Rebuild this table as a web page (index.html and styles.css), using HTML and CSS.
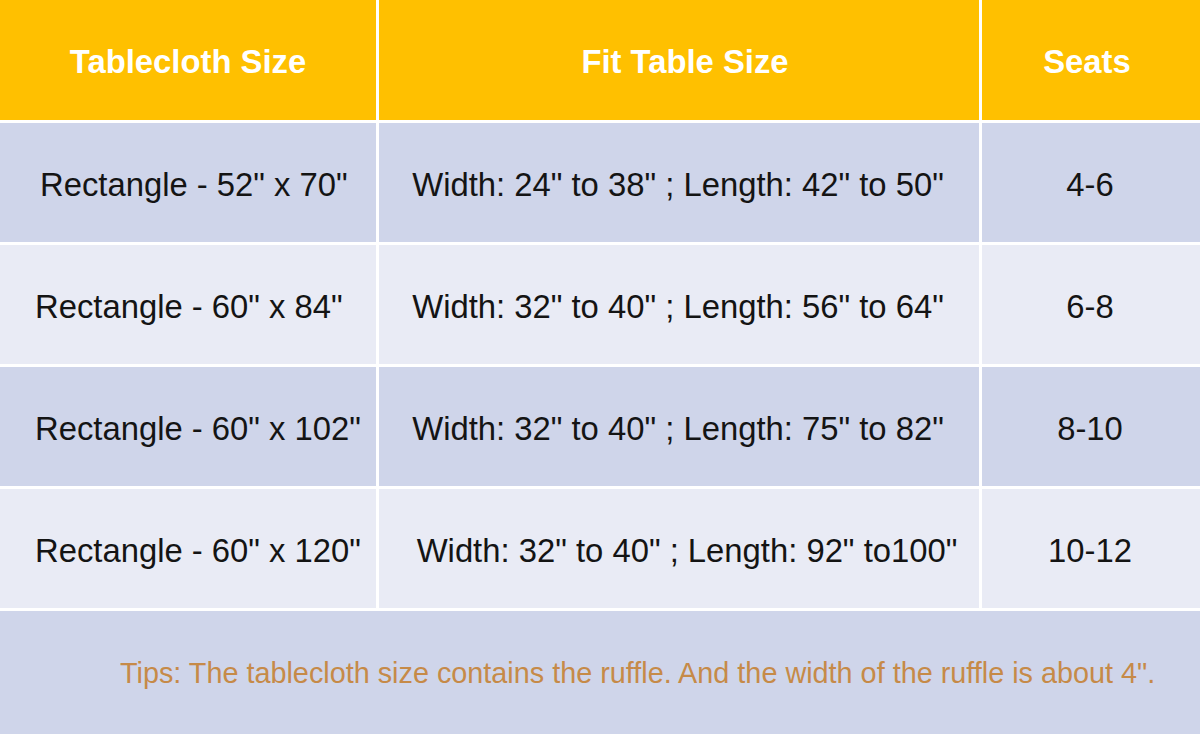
FILE: index.html
```html
<!DOCTYPE html>
<html lang="en">
<head>
<meta charset="utf-8">
<title>Tablecloth Size Chart</title>
<link rel="stylesheet" href="styles.css">
</head>
<body>
<div class="chart">
  <div class="cell head">Tablecloth Size</div>
  <div class="cell head head-mid">Fit Table Size</div>
  <div class="cell head head-last">Seats</div>

  <div class="cell dark size size-first">Rectangle - 52" x 70"</div>
  <div class="cell dark fit">Width: 24" to 38" ; Length: 42" to 50"</div>
  <div class="cell dark seats">4-6</div>

  <div class="cell light size">Rectangle - 60" x 84"</div>
  <div class="cell light fit">Width: 32" to 40" ; Length: 56" to 64"</div>
  <div class="cell light seats">6-8</div>

  <div class="cell dark size">Rectangle - 60" x 102"</div>
  <div class="cell dark fit">Width: 32" to 40" ; Length: 75" to 82"</div>
  <div class="cell dark seats">8-10</div>

  <div class="cell light size">Rectangle - 60" x 120"</div>
  <div class="cell light fit fit-last">Width: 32" to 40" ; Length: 92" to100"</div>
  <div class="cell light seats">10-12</div>

  <div class="cell dark tips">Tips: The tablecloth size contains the ruffle. And the width of the ruffle is about 4".</div>
</div>
</body>
</html>
```

FILE: styles.css
```css
html, body {
  margin: 0;
  padding: 0;
  background: #ffffff;
}

.chart {
  width: 1200px;
  height: 734px;
  display: grid;
  grid-template-columns: 376px 600px 1fr;
  grid-template-rows: 120px 119px 119px 119px 119px 1fr;
  column-gap: 3px;
  row-gap: 3px;
  background: #ffffff;
  font-family: "Liberation Sans", Arial, sans-serif;
}

.cell {
  display: flex;
  align-items: center;
  justify-content: center;
  white-space: nowrap;
  color: #141414;
  font-size: 32.8px;
  padding-top: 4px;
}

.head {
  background: #ffc000;
  color: #ffffff;
  font-weight: bold;
  font-size: 32.8px;
}

.head-mid {
  padding-left: 12px;
}

.head-last {
  padding-right: 8px;
}

.dark {
  background: #cfd5ea;
}

.light {
  background: #e9ebf5;
}

.size {
  justify-content: flex-start;
  padding-left: 35px;
}

.size-first {
  padding-left: 40px;
}

.fit {
  padding-right: 2px;
}

.fit-last {
  padding-left: 18px;
}

.seats {
  padding-right: 2px;
}

.tips {
  grid-column: 1 / -1;
  justify-content: flex-start;
  padding-left: 120px;
  padding-top: 2px;
  color: #c68a48;
  font-size: 28.8px;
}
```
